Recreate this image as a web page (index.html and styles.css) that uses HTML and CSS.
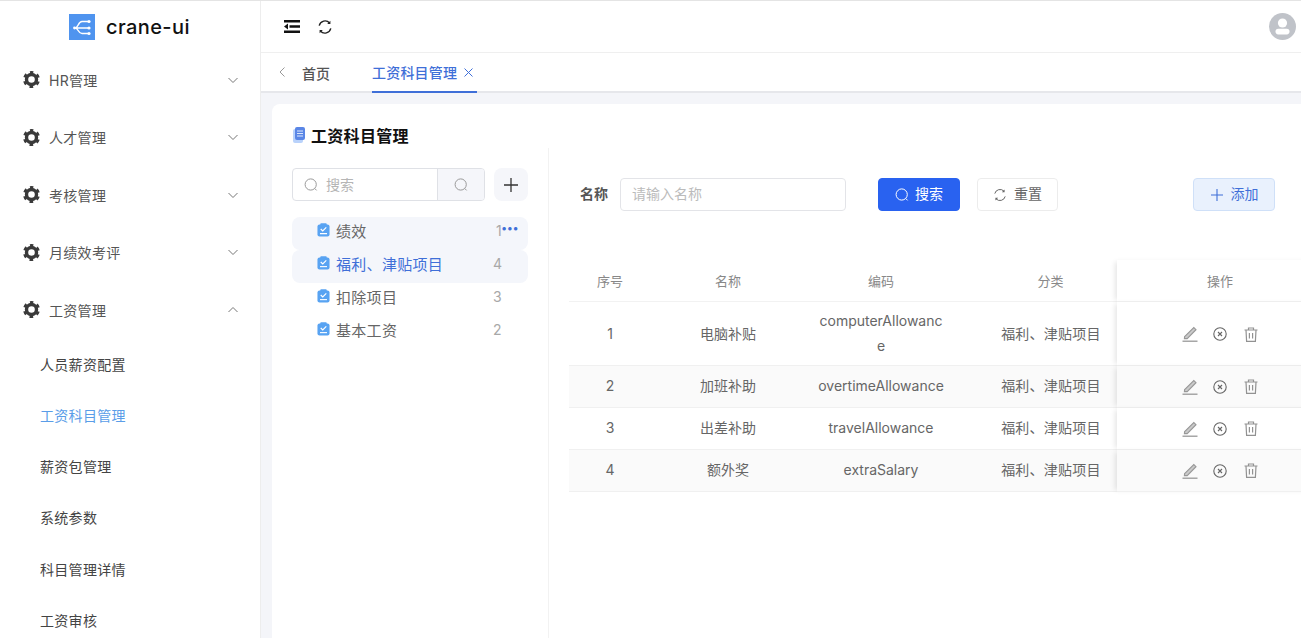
FILE: index.html
```html
<!DOCTYPE html>
<html lang="en">
<head>
    <meta charset="UTF-8">
    <meta name="viewport" content="width=device-width, initial-scale=1.0">
    <title>crane-ui</title>
    <link rel="stylesheet" href="styles.css">
</head>
<body>

    <svg class="sprites" aria-hidden="true">
        <symbol id="gear" viewBox="0.5 0.5 17 17">
            <circle cx="9" cy="9" r="5" fill="none" stroke="#3a3a3a" stroke-width="3.4"/>
            <circle cx="9" cy="9" r="7.2" fill="none" stroke="#3a3a3a" stroke-width="2.6" stroke-dasharray="3.6 3.94" stroke-dashoffset="1.8" transform="rotate(-90 9 9)"/>
        </symbol>
        <symbol id="chevron" viewBox="0 0 12 12">
            <path d="M1.5 4l4.5 4.5L10.5 4" fill="none" stroke="#777" stroke-width="1"/>
        </symbol>
        <symbol id="search" viewBox="0 0 14 14">
            <circle cx="6.7" cy="6.5" r="5.6" fill="none" stroke="currentColor" stroke-width="1"/>
            <path d="M10.8 10.5l1.8 1.9" fill="none" stroke="currentColor" stroke-width="1"/>
        </symbol>
        <symbol id="task" viewBox="0 0 14 15">
            <rect x="0.5" y="1.5" width="13" height="13" rx="2.2" fill="#58a3f2"/>
            <rect x="3.5" y="0.2" width="7" height="3" rx="1" fill="#58a3f2"/>
            <path d="M4 6.4l2.2 2L10 4.7" fill="none" stroke="#fff" stroke-width="1.3"/>
            <path d="M3.2 11.4h7.6" stroke="#fff" stroke-width="1.2"/>
        </symbol>
        <symbol id="edit" viewBox="0 0 16 16">
            <path d="M2.6 10.6L11.8 1.6l2.2 2.1-8.8 8.9H2.4z" fill="#c9c9c9" stroke="#989898" stroke-width="1.1"/>
            <path d="M0.5 15.2h15" stroke="#989898" stroke-width="1.3"/>
        </symbol>
        <symbol id="cancel" viewBox="0 0 14 14">
            <circle cx="7" cy="7" r="6.2" fill="none" stroke="#666" stroke-width="1.1"/>
            <path d="M5 5l4 4M9 5l-4 4" stroke="#666" stroke-width="1.1"/>
        </symbol>
        <symbol id="trash" viewBox="0 0 14 15">
            <path d="M0.5 3h13M4.5 3V1h5v2M2 3l.6 11.3h8.8L12 3M5.4 6v5.5M8.6 6v5.5" fill="none" stroke="#929292" stroke-width="1.2"/>
        </symbol>
    </svg>

    <div class="app">
        <!-- Sidebar -->
        <aside class="sidebar">
            <div class="logo">
                <svg class="logo-mark" viewBox="0 0 26 26">
                    <rect width="26" height="26" fill="#4f94ef"/>
                    <path d="M6 14c3.5 0 3-6.5 7-6.5h6M6 14h13M6 14c3.5 0 3 5.5 7 5.5h6" fill="none" stroke="#fff" stroke-width="1.3"/>
                    <circle cx="5.5" cy="14" r="1.4" fill="#fff"/>
                    <circle cx="20" cy="7.5" r="1.6" fill="#fff"/>
                    <circle cx="20" cy="14" r="1.6" fill="#fff"/>
                    <circle cx="20" cy="19.5" r="1.6" fill="#fff"/>
                </svg>
                <span class="logo-text">crane-ui</span>
            </div>
            <ul class="menu">
                <li class="menu-item"><svg class="gear"><use href="#gear"/></svg><span>HR管理</span><svg class="chevron"><use href="#chevron"/></svg></li>
                <li class="menu-item"><svg class="gear"><use href="#gear"/></svg><span>人才管理</span><svg class="chevron"><use href="#chevron"/></svg></li>
                <li class="menu-item"><svg class="gear"><use href="#gear"/></svg><span>考核管理</span><svg class="chevron"><use href="#chevron"/></svg></li>
                <li class="menu-item"><svg class="gear"><use href="#gear"/></svg><span>月绩效考评</span><svg class="chevron"><use href="#chevron"/></svg></li>
                <li class="menu-item"><svg class="gear"><use href="#gear"/></svg><span>工资管理</span><svg class="chevron open"><use href="#chevron"/></svg></li>
            </ul>
            <ul class="submenu">
                <li>人员薪资配置</li>
                <li class="active">工资科目管理</li>
                <li>薪资包管理</li>
                <li>系统参数</li>
                <li>科目管理详情</li>
                <li>工资审核</li>
            </ul>
        </aside>

        <div class="main">
            <!-- Top bar -->
            <header class="topbar">
                <svg class="fold" viewBox="0 0 16 13">
                    <path d="M0 0h16v2.6H0zM0 10.4h16V13H0zM5.5 5.2H16v2.6H5.5zM0 6.5l4-3v6z" fill="#111"/>
                </svg>
                <svg class="reload" viewBox="0 0 14 14">
                    <path d="M1.2 5.6A6 6 0 0 1 11.6 3M12.8 8.4A6 6 0 0 1 2.4 11" fill="none" stroke="#222" stroke-width="1.4"/>
                    <path d="M12.4 0.8v3.2H9.2zM1.6 13.2V10h3.2z" fill="#222"/>
                </svg>
                <svg class="avatar" viewBox="0 0 27 27">
                    <circle cx="13.5" cy="13.5" r="13.5" fill="#c0c3c9"/>
                    <circle cx="13.5" cy="10" r="4.6" fill="#fff"/>
                    <rect x="6.5" y="15.8" width="14" height="5.6" rx="2.8" fill="#fff"/>
                </svg>
            </header>

            <!-- Tabs -->
            <nav class="tabs">
                <svg class="tabs-prev" viewBox="0 0 6 10"><path d="M5.5 0.5L1 5l4.5 4.5" fill="none" stroke="#999" stroke-width="1"/></svg>
                <span class="tab">首页</span>
                <span class="tab active">工资科目管理
                    <svg class="tab-close" viewBox="0 0 9 9"><path d="M0.5 0.5l8 8M8.5 0.5l-8 8" stroke="#3f6fd8" stroke-width="1"/></svg>
                </span>
            </nav>

            <div class="content">
                <section class="card">
                    <h1 class="card-title">
                        <svg class="title-icon" viewBox="0 0 12 16">
                            <rect x="0" y="2" width="10" height="14" rx="2" fill="#b9d2fb"/>
                            <rect x="2" y="0" width="10" height="13" rx="2" fill="#5a86e6"/>
                            <path d="M4 4h6M4 6.5h6M4 9h6" stroke="#dce7fd" stroke-width="1"/>
                        </svg>
                        工资科目管理
                    </h1>

                    <div class="panels">
                        <!-- Category tree -->
                        <div class="tree-panel">
                            <div class="tree-tools">
                                <div class="tree-search">
                                    <div class="tree-input"><svg class="icon-search"><use href="#search"/></svg><span>搜索</span></div>
                                    <div class="tree-search-btn"><svg class="icon-search"><use href="#search"/></svg></div>
                                </div>
                                <button class="tree-add">
                                    <svg viewBox="0 0 14 14"><path d="M7 0v14M0 7h14" stroke="#333" stroke-width="1.3"/></svg>
                                </button>
                            </div>
                            <ul class="tree">
                                <li class="tree-row hover"><svg class="icon-task"><use href="#task"/></svg><span class="tree-name">绩效</span><span class="tree-count">1</span><span class="tree-more">•••</span></li>
                                <li class="tree-row selected"><svg class="icon-task"><use href="#task"/></svg><span class="tree-name">福利、津贴项目</span><span class="tree-count">4</span></li>
                                <li class="tree-row"><svg class="icon-task"><use href="#task"/></svg><span class="tree-name">扣除项目</span><span class="tree-count">3</span></li>
                                <li class="tree-row"><svg class="icon-task"><use href="#task"/></svg><span class="tree-name">基本工资</span><span class="tree-count">2</span></li>
                            </ul>
                        </div>

                        <!-- Salary items -->
                        <div class="list-panel">
                            <form class="filter">
                                <label class="filter-label">名称</label>
                                <div class="filter-input">请输入名称</div>
                                <button type="button" class="btn btn-primary"><svg class="icon-search"><use href="#search"/></svg><span>搜索</span></button>
                                <button type="button" class="btn btn-plain">
                                    <svg class="btn-icon" viewBox="0 0 14 14">
                                        <path d="M1.8 5.6A5.4 5.4 0 0 1 11 3.2M12.2 8.4A5.4 5.4 0 0 1 3 10.8" fill="none" stroke="#666" stroke-width="1"/>
                                        <path d="M11.6 1.4v2.8H8.8zM2.4 12.6V9.8h2.8z" fill="#666"/>
                                    </svg><span>重置</span>
                                </button>
                                <button type="button" class="btn btn-add">
                                    <svg class="btn-icon" viewBox="0 0 14 14"><path d="M7 1v12M1 7h12" stroke="#3f6fd8" stroke-width="1.1"/></svg><span>添加</span>
                                </button>
                            </form>

                            <table class="grid">
                                <colgroup>
                                    <col class="col-no"><col class="col-name"><col class="col-code"><col class="col-type"><col class="col-op">
                                </colgroup>
                                <thead>
                                    <tr><th>序号</th><th>名称</th><th>编码</th><th class="type">分类</th><th class="op">操作</th></tr>
                                </thead>
                                <tbody>
                                    <tr class="tall">
                                        <td>1</td><td>电脑补贴</td><td class="code">computerAllowance</td><td class="type">福利、津贴项目</td>
                                        <td class="op"><div class="actions"><svg class="act-edit"><use href="#edit"/></svg><svg class="act-cancel"><use href="#cancel"/></svg><svg class="act-trash"><use href="#trash"/></svg></div></td>
                                    </tr>
                                    <tr class="stripe">
                                        <td>2</td><td>加班补助</td><td class="code">overtimeAllowance</td><td class="type">福利、津贴项目</td>
                                        <td class="op"><div class="actions"><svg class="act-edit"><use href="#edit"/></svg><svg class="act-cancel"><use href="#cancel"/></svg><svg class="act-trash"><use href="#trash"/></svg></div></td>
                                    </tr>
                                    <tr>
                                        <td>3</td><td>出差补助</td><td class="code">travelAllowance</td><td class="type">福利、津贴项目</td>
                                        <td class="op"><div class="actions"><svg class="act-edit"><use href="#edit"/></svg><svg class="act-cancel"><use href="#cancel"/></svg><svg class="act-trash"><use href="#trash"/></svg></div></td>
                                    </tr>
                                    <tr class="stripe">
                                        <td>4</td><td>额外奖</td><td class="code">extraSalary</td><td class="type">福利、津贴项目</td>
                                        <td class="op"><div class="actions"><svg class="act-edit"><use href="#edit"/></svg><svg class="act-cancel"><use href="#cancel"/></svg><svg class="act-trash"><use href="#trash"/></svg></div></td>
                                    </tr>
                                </tbody>
                            </table>
                        </div>
                    </div>
                </section>
            </div>
        </div>
    </div>

</body>
</html>
```

FILE: styles.css
```css
* {
    box-sizing: border-box;
}

html,
body {
    height: 100%;
    margin: 0;
    overflow: hidden;
}

body {
    font-family: Inter, "Noto Sans CJK SC", sans-serif;
    font-size: 14px;
    color: #555;
    background: #fff;
    border-top: 1px solid #e4e4e4;
}

ul {
    list-style: none;
    margin: 0;
    padding: 0;
}

.sprites {
    display: none;
}

.app {
    display: flex;
    height: 637px;
}

/* Sidebar */
.sidebar {
    flex: 0 0 261px;
    border-right: 1px solid #ededed;
    overflow: hidden;
}

.logo {
    display: flex;
    align-items: center;
    height: 50px;
    padding: 2px 0 0 69px;
}

.logo-mark {
    width: 26px;
    height: 26px;
    margin-right: 11px;
}

.logo-text {
    font-size: 20px;
    font-weight: 500;
    letter-spacing: 0.4px;
    color: #111;
}

.menu-item {
    display: flex;
    align-items: center;
    height: 57.5px;
    padding-left: 23px;
    letter-spacing: 0.3px;
}

.gear {
    width: 17px;
    height: 17px;
    margin-right: 9px;
}

.chevron {
    width: 12px;
    height: 12px;
    margin-left: auto;
    margin-right: 21px;
}

.chevron.open {
    transform: rotate(180deg);
}

.submenu li {
    height: 51.3px;
    line-height: 51.3px;
    padding-left: 40px;
    letter-spacing: 0.3px;
    color: #444;
}

.submenu li.active {
    color: #5a9de8;
}

/* Top bar and tabs */
.main {
    flex: 1;
    min-width: 0;
    display: flex;
    flex-direction: column;
}

.topbar {
    display: flex;
    align-items: center;
    flex: 0 0 52px;
    padding: 0 5px 0 23px;
    border-bottom: 1px solid #efefef;
}

.fold {
    width: 16px;
    height: 13px;
    margin-right: 19px;
}

.reload {
    width: 14px;
    height: 14px;
    margin-left: -1px;
}

.avatar {
    width: 27px;
    height: 27px;
    margin-left: auto;
}

.tabs {
    display: flex;
    align-items: flex-start;
    flex: 0 0 40px;
    height: 40px;
    padding-left: 18px;
    border-bottom: 2px solid #e6e7eb;
}

.tabs-prev {
    width: 6px;
    height: 10px;
    margin-top: 14px;
    margin-right: 17px;
}

.tab {
    display: flex;
    align-items: center;
    height: 38px;
    padding-top: 2px;
    font-weight: 500;
    margin-right: 42px;
}

.tab.active {
    width: 105px;
    height: 40px;
    margin-right: 0;
    padding-top: 0;
    letter-spacing: 0.2px;
    color: #3f6fd8;
    border-bottom: 2px solid #3f6fd8;
    white-space: nowrap;
}

.tab-close {
    width: 9px;
    height: 9px;
    margin-left: 7px;
}

/* Content */
.content {
    flex: 1;
    min-height: 0;
    padding: 11px 0 0 11px;
    background: #f4f5f9;
}

.card {
    height: 100%;
    padding: 21px 0 0 20px;
    background: #fff;
    border-radius: 8px 0 0 0;
    overflow: hidden;
}

.card-title {
    display: flex;
    align-items: center;
    height: 20px;
    margin: 0;
    font-size: 16px;
    font-weight: 700;
    letter-spacing: 0.3px;
    color: #111;
}

.title-icon {
    width: 12px;
    height: 16px;
    margin-left: 1px;
    margin-right: 6px;
}

.panels {
    display: flex;
    margin-top: 3px;
    height: 600px;
}

.tree-panel {
    flex: 0 0 257px;
    padding: 20px 20px 0 0;
    border-right: 1px solid #f2f2f2;
}

.tree-tools {
    display: flex;
    gap: 9px;
}

.tree-search {
    display: flex;
    flex: 0 0 193px;
    height: 33px;
    border: 1px solid #dfe1e6;
    border-radius: 4px;
    overflow: hidden;
}

.tree-input {
    display: flex;
    align-items: center;
    flex: 1;
    padding-left: 11px;
    color: #b5b5b5;
}

.tree-input .icon-search {
    margin-right: 8px;
}

.tree-input span {
    margin-top: -2px;
}

.tree-search-btn {
    display: flex;
    align-items: center;
    justify-content: center;
    flex: 0 0 47px;
    background: #f5f6fa;
    border-left: 1px solid #dfe1e6;
}

.icon-search {
    width: 14px;
    height: 14px;
    color: #999;
}

.tree-add {
    display: flex;
    align-items: center;
    justify-content: center;
    width: 34px;
    height: 33px;
    padding: 0;
    border: none;
    border-radius: 8px;
    background: #f5f6fa;
}

.tree-add svg {
    width: 14px;
    height: 14px;
}

.tree {
    margin-top: 16px;
}

.tree-row {
    display: flex;
    align-items: center;
    height: 33px;
    padding: 0 0 7px 25px;
    border-radius: 8px;
    font-size: 15px;
    color: #666;
}

.tree-row.hover,
.tree-row.selected {
    background: #f4f6fb;
}

.tree-row.selected .tree-name {
    color: #3f6fd8;
}

.icon-task {
    width: 13px;
    height: 14px;
    margin-right: 6px;
}

.tree-name {
    flex: 1;
    letter-spacing: 0.3px;
}

.tree-count {
    flex: 0 0 35px;
    font-size: 14px;
    color: #a8a8a8;
}

.tree-row.hover .tree-count {
    margin-right: -27px;
    padding-left: 3px;
}

.tree-more {
    flex: 0 0 27px;
    margin-top: -5px;
    font-size: 11px;
    letter-spacing: -0.5px;
    color: #3f6fd8;
}

/* Filter and table */
.list-panel {
    flex: 1;
    min-width: 0;
    padding-left: 20px;
}

.filter {
    display: flex;
    align-items: center;
    margin-top: 30px;
    padding-left: 11px;
    padding-right: 26px;
}

.filter-label {
    width: 40px;
    margin-top: -3px;
    font-weight: 600;
    color: #555;
}

.filter-input {
    display: flex;
    align-items: center;
    width: 226px;
    height: 33px;
    padding: 0 0 3px 11px;
    margin-right: 32px;
    border: 1px solid #e3e4e8;
    border-radius: 4px;
    color: #bbb;
}

.btn {
    display: flex;
    align-items: center;
    justify-content: center;
    height: 33px;
    padding: 0;
    border-radius: 4px;
    font: inherit;
}

.btn span {
    margin-top: -3px;
}

.btn-icon {
    width: 14px;
    height: 14px;
    margin-right: 7px;
}

.btn-primary {
    width: 82px;
    margin-right: 17px;
    border: 1px solid #2962f0;
    background: #2962f0;
    color: #fff;
}

.btn-primary .icon-search {
    margin-right: 6px;
    color: #fff;
}

.btn-plain {
    width: 81px;
    border: 1px solid #ececec;
    background: #fff;
    color: #666;
}

.btn-add {
    width: 82px;
    margin-left: auto;
    border: 1px solid #cfe0f8;
    background: #e9f1fd;
    color: #3f6fd8;
}

.grid {
    width: 754px;
    margin-top: 49px;
    border-collapse: separate;
    border-spacing: 0;
    table-layout: fixed;
    text-align: center;
}

.col-no { width: 82px; }
.col-name { width: 154px; }
.col-code { width: 152px; }
.col-type { width: 160px; }
.col-op { width: 206px; }

.grid th {
    height: 42px;
    font-size: 13px;
    font-weight: 400;
    color: #888;
    border-bottom: 1px solid #f2f2f2;
}

.grid td {
    height: 42px;
    padding: 0 0 2px;
    color: #666;
    line-height: 25px;
    border-bottom: 1px solid #f0f0f0;
}

.grid .tall td {
    height: 64px;
    padding-bottom: 1px;
}

.grid .stripe td {
    background: #fafafa;
}

.grid td.code {
    padding-left: 12px;
    padding-right: 12px;
    word-break: break-all;
}

.grid .type {
    padding-left: 28px;
    white-space: nowrap;
}

.grid td.type {
    letter-spacing: 0.25px;
}

.grid .op {
    position: relative;
    background: #fff;
    box-shadow: -4px 0 5px -2px rgba(0, 0, 0, 0.1);
}

.actions {
    display: flex;
    align-items: center;
    margin-top: 2px;
    padding-left: 65px;
}

.actions svg {
    display: block;
}

.act-edit {
    width: 16px;
    height: 16px;
    margin-right: 15px;
}

.act-cancel {
    width: 14px;
    height: 14px;
    margin-right: 17px;
}

.act-trash {
    width: 14px;
    height: 15px;
}
```
